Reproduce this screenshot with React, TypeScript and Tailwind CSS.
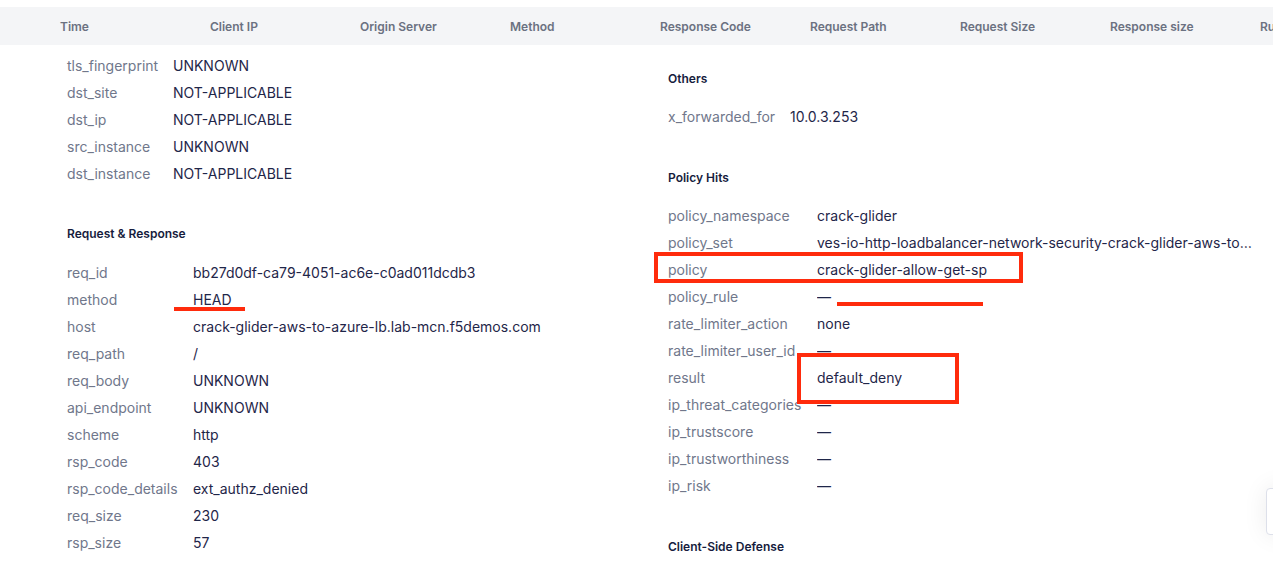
import React from "react";

const headers = ["Time", "Client IP", "Origin Server", "Method", "Response Code", "Request Path", "Request Size", "Response size", "Rule"];

type Row = [string, string];

const net: Row[] = [
  ["tls_fingerprint", "UNKNOWN"],
  ["dst_site", "NOT-APPLICABLE"],
  ["dst_ip", "NOT-APPLICABLE"],
  ["src_instance", "UNKNOWN"],
  ["dst_instance", "NOT-APPLICABLE"],
];

const reqres: Row[] = [
  ["req_id", "bb27d0df-ca79-4051-ac6e-c0ad011dcdb3"],
  ["method", "HEAD"],
  ["host", "crack-glider-aws-to-azure-lb.lab-mcn.f5demos.com"],
  ["req_path", "/"],
  ["req_body", "UNKNOWN"],
  ["api_endpoint", "UNKNOWN"],
  ["scheme", "http"],
  ["rsp_code", "403"],
  ["rsp_code_details", "ext_authz_denied"],
  ["req_size", "230"],
  ["rsp_size", "57"],
];

const others: Row[] = [["x_forwarded_for", "10.0.3.253"]];

const policy: Row[] = [
  ["policy_namespace", "crack-glider"],
  ["policy_set", "ves-io-http-loadbalancer-network-security-crack-glider-aws-to-azure-lb"],
  ["policy", "crack-glider-allow-get-sp"],
  ["policy_rule", "—"],
  ["rate_limiter_action", "none"],
  ["rate_limiter_user_id", "—"],
  ["result", "default_deny"],
  ["ip_threat_categories", "—"],
  ["ip_trustscore", "—"],
  ["ip_trustworthiness", "—"],
  ["ip_risk", "—"],
];

function Rows({ rows, keyW }: { rows: Row[]; keyW: string }) {
  return (
    <div className="flex flex-col">
      {rows.map(([k, v]) => (
        <div key={k} className="flex h-[27px] items-center text-[14px] leading-[27px]">
          <div className={`${keyW} shrink-0 whitespace-nowrap text-[#70778b]`}>{k}</div>
          <div className="min-w-0 flex-1 truncate text-[#1f2649]">{v}</div>
        </div>
      ))}
    </div>
  );
}

function Heading({ children, className }: { children: React.ReactNode; className: string }) {
  return (
    <div className={`${className} h-[16px] text-[12px] font-semibold leading-[16px] text-[#161c3d]`}>{children}</div>
  );
}

export default function App() {
  return (
    <div
      className="relative h-[572px] w-[1273px] overflow-hidden bg-white"
      style={{ fontFamily: "Inter, 'Noto Sans', sans-serif" }}
    >
      <div className="mt-[7px] flex h-[38px] items-center overflow-hidden whitespace-nowrap bg-[#f4f5f7] pl-[60px] pt-[2px]">
        {headers.map((h) => (
          <div key={h} className="w-[150px] shrink-0 text-[12px] font-semibold text-[#6b7181]">
            {h}
          </div>
        ))}
      </div>

      <div className="flex pl-[67px]">
        <div className="w-[601px] shrink-0 pt-[7px]">
          <Rows rows={net} keyW="w-[106px]" />
          <div className="h-[39px]" />
          <Heading className="mb-[17px]">Request &amp; Response</Heading>
          <Rows rows={reqres} keyW="w-[126px]" />
        </div>
        <div className="w-[586px] shrink-0 pt-[26px]">
          <Heading className="mb-[16px]">Others</Heading>
          <Rows rows={others} keyW="w-[122px]" />
          <div className="h-[40px]" />
          <Heading className="mb-[16px]">Policy Hits</Heading>
          <Rows rows={policy} keyW="w-[149px]" />
          <div className="h-[40px]" />
          <Heading className="mb-[16px]">Client-Side Defense</Heading>
        </div>
      </div>

      {/* annotations */}
      <div className="absolute left-[174px] top-[307px] h-[4px] w-[71px] bg-[#ff2b0c]" />
      <div className="absolute left-[654px] top-[252px] h-[31px] w-[369px] border-[4px] border-[#ff2b0c]" />
      <div className="absolute left-[837px] top-[302px] h-[4px] w-[146px] bg-[#ff2b0c]" />
      <div className="absolute left-[797px] top-[353px] h-[51px] w-[162px] border-[4px] border-[#ff2b0c]" />

      {/* floating widget */}
      <div className="absolute left-[1266px] top-[488px] h-[47px] w-[40px] rounded-[4px] border border-[#dde0ea] bg-white shadow-[0_0_24px_rgba(0,0,0,0.08)]" />
    </div>
  );
}
